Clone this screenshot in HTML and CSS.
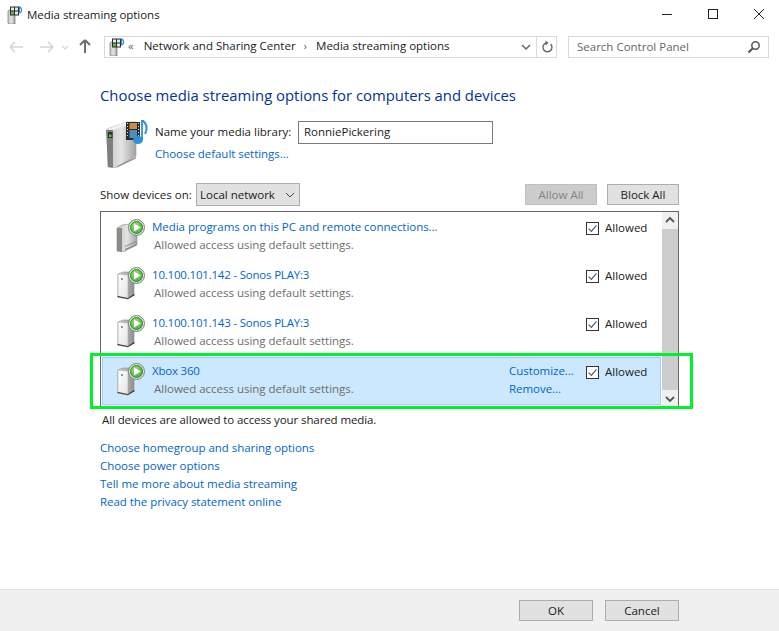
FILE: index.html
```html
<!DOCTYPE html>
<html lang="en">
<head>
<meta charset="utf-8">
<title>Media streaming options</title>
<link rel="stylesheet" href="styles.css">
</head>
<body>
<svg class="defs" width="0" height="0" aria-hidden="true">
  <defs>
    <linearGradient id="tw" x1="0" x2="1" y1="0" y2="0"><stop offset="0" stop-color="#d8d8d8"/><stop offset="1" stop-color="#8e8e8e"/></linearGradient>
    <linearGradient id="tg" x1="0" x2="1" y1="0" y2="0"><stop offset="0" stop-color="#c4c4c4"/><stop offset=".5" stop-color="#e4e4e4"/><stop offset="1" stop-color="#a2a2a2"/></linearGradient>
    <linearGradient id="tf" x1="0" x2="1" y1="0" y2="1"><stop offset="0" stop-color="#ffffff"/><stop offset="1" stop-color="#e4e4e4"/></linearGradient>
    <radialGradient id="gb" cx=".4" cy=".35" r=".8"><stop offset="0" stop-color="#a6e07e"/><stop offset="1" stop-color="#3f9f34"/></radialGradient>
    <symbol id="dev-white" viewBox="0 0 38 34">
      <path d="M3 8l5-2 11 0v23l-6 4-10-2z" fill="url(#tw)" stroke="#8f8f8f" stroke-width=".6"/>
      <path d="M3 8l10 1v24l-10-2z" fill="url(#tf)" stroke="#a5a5a5" stroke-width=".6"/>
      <rect x="6" y="12" width="2" height="2" fill="#7ea87e"/>
      <path d="M2 31l11 2 7-4-1-1-6 4-10-2z" fill="#3c3c3c"/>
      <circle cx="21.500" cy="9.500" r="8" fill="#d7e5d3" stroke="#77897a"/>
      <circle cx="21.500" cy="9.500" r="6" fill="url(#gb)" stroke="#2c8f2a"/>
      <path d="M19 5.600v7.800l6.800-3.900z" fill="#fff"/>
    </symbol>
    <symbol id="dev-gray" viewBox="0 0 38 34">
      <path d="M2 10l5-3 15-2v22l-14 7-6-1z" fill="url(#tg)" stroke="#8c8c8c" stroke-width=".6"/>
      <path d="M2 10l5 0v24l-5-1z" fill="#8a8a8a"/>
      <rect x="3.500" y="12" width="2" height="2" fill="#62b93c"/>
      <path d="M10 31l11-5v1.400l-11 5zM10 28l11-5v1l-11 5z" fill="#8a8a8a"/>
      <circle cx="21.500" cy="9.500" r="8" fill="#d7e5d3" stroke="#77897a"/>
      <circle cx="21.500" cy="9.500" r="6" fill="url(#gb)" stroke="#2c8f2a"/>
      <path d="M19 5.600v7.800l6.800-3.900z" fill="#fff"/>
    </symbol>
    <symbol id="media" viewBox="0 0 44 48">
      <path d="M2 9l20-7h9v34L10 48l-7-1z" fill="url(#tg)" stroke="#9b9b9b" stroke-width=".6"/>
      <path d="M1 10h7v37.500l-5-.5z" fill="#7f7f7f"/>
      <path d="M1 9.500l20-7.500h10L9 10z" fill="#f0f0f0"/>
      <rect x="3" y="12" width="4.500" height="6" fill="#2f2f2f"/>
      <rect x="4" y="14.500" width="2.500" height="2.500" fill="#62c13a"/>
      <path d="M12 46l19-9v1.600l-19 9z" fill="#8f8f8f"/>
      <rect x="21" y="2" width="14" height="18" fill="#2b2b2b"/>
      <path d="M22 3h1v1h-1zM22 6h1v1h-1zM22 9h1v1h-1zM22 12h1v1h-1zM22 15h1v1h-1zM33 3h1v1h-1zM33 6h1v1h-1zM33 9h1v1h-1zM33 12h1v1h-1zM33 15h1v1h-1z" fill="#ddd"/>
      <rect x="24.500" y="3" width="7.500" height="6" fill="#d08a48"/>
      <rect x="24.500" y="10" width="7.500" height="8" fill="#4c8fc4"/>
      <path d="M37 0c4 3 6 8 3 14" fill="none" stroke="#2f8fd8" stroke-width="2"/>
      <path d="M37 0v19" stroke="#2f8fd8" stroke-width="1.800"/>
      <ellipse cx="33" cy="20" rx="5" ry="4" fill="#2f8fd8"/>
    </symbol>
    <symbol id="small" viewBox="0 0 16 18">
      <path d="M1 5l1-1h6v14H2l-1-1z" fill="url(#tg)" stroke="#777" stroke-width=".7"/>
      <rect x="3" y="0.500" width="9" height="9" fill="#2b2b2b"/>
      <rect x="4" y="1.500" width="3" height="3" fill="#e8e8e8"/>
      <rect x="8" y="1.500" width="3" height="3" fill="#e8e8e8"/>
      <rect x="4" y="5.500" width="3" height="3" fill="#67b84a"/>
      <rect x="8" y="5.500" width="3" height="3" fill="#e8e8e8"/>
      <path d="M12.500 .5c2 1.500 3 3.500 1 6.500M12.500 .5v7" fill="none" stroke="#2f8fd8" stroke-width="1.200"/>
    </symbol>
    <symbol id="check" viewBox="0 0 13 13">
      <rect x=".5" y=".5" width="12" height="12" fill="#fff" stroke="#333"/>
      <path d="M2.600 6.600l2.800 2.800 5-6" fill="none" stroke="#555" stroke-width="1.100"/>
    </symbol>
  </defs>
</svg>

<div class="window">
  <header class="titlebar">
    <svg class="ico-small" width="16" height="18"><use href="#small"/></svg>
    <span class="title">Media streaming options</span>
    <div class="controls">
      <svg width="46" height="30" viewBox="0 0 46 30"><path d="M18 14.500h10" stroke="#222"/></svg>
      <svg width="46" height="30" viewBox="0 0 46 30"><rect x="18.500" y="9.500" width="9" height="9" fill="none" stroke="#222"/></svg>
      <svg width="46" height="30" viewBox="0 0 46 30"><path d="M18 9l10 10M28 9L18 19" stroke="#222" fill="none"/></svg>
    </div>
  </header>

  <nav class="navbar">
    <div class="navbtns">
      <svg width="30" height="14" viewBox="0 0 30 14"><path d="M10 7H23M10 7l5-5M10 7l5 5" stroke="#d4d4d4" stroke-width="1.600" fill="none"/></svg>
      <svg width="24" height="14" viewBox="0 0 24 14"><path d="M10 7H23M23 7l-5-5M23 7l-5 5" stroke="#d4d4d4" stroke-width="1.600" fill="none"/></svg>
      <svg width="20" height="14" viewBox="0 0 20 14"><path d="M8 6l3 3 3-3" stroke="#d4d4d4" stroke-width="1.200" fill="none"/></svg>
      <svg width="24" height="16" viewBox="0 0 24 16"><path d="M7 2v13M7 2L2 7M7 2l5 5" stroke="#6e6e6e" stroke-width="2" fill="none" transform="translate(4 -1)"/></svg>
    </div>
    <div class="address">
      <svg class="ico-addr" width="16" height="18"><use href="#small"/></svg>
      <span class="crumb-sep chev">«</span>
      <span class="crumb">Network and Sharing Center</span>
      <span class="crumb-sep">›</span>
      <span class="crumb">Media streaming options</span>
      <svg class="addr-down" width="12" height="8" viewBox="0 0 12 8"><path d="M2 2l4 4 4-4" stroke="#666" stroke-width="1.500" fill="none"/></svg>
      <span class="addr-refresh">
        <svg width="14" height="14" viewBox="0 0 14 14"><path d="M10.500 4A4.500 4.500 0 1 1 6 3" stroke="#6a6a6a" stroke-width="1.500" fill="none"/><path d="M5.500 0.500v5l3-2.500z" fill="#6a6a6a"/></svg>
      </span>
    </div>
    <div class="search">
      <span class="search-text">Search Control Panel</span>
      <svg width="14" height="14" viewBox="0 0 14 14"><circle cx="8.500" cy="5.500" r="3.700" fill="none" stroke="#555" stroke-width="1.500"/><path d="M5.800 8.200L1.500 12.500" stroke="#555" stroke-width="2"/></svg>
    </div>
  </nav>

  <main class="content">
    <h1>Choose media streaming options for computers and devices</h1>
    <section class="library">
      <svg class="ico-media" width="44" height="48"><use href="#media"/></svg>
      <div class="lib-fields">
        <div class="lib-name">
          <label class="lib-label">Name your media library:</label>
          <div class="textbox">RonniePickering</div>
        </div>
        <a class="link lib-link">Choose default settings...</a>
      </div>
    </section>

    <section class="toolbar">
      <span class="show-label">Show devices on:</span>
      <div class="select">
        <span>Local network</span>
        <svg width="10" height="6" viewBox="0 0 10 6"><path d="M1 1l4 4 4-4" stroke="#444" fill="none"/></svg>
      </div>
      <div class="tool-btns">
        <button class="btn disabled">Allow All</button>
        <button class="btn">Block All</button>
      </div>
    </section>

    <section class="listbox">
      <div class="rows">
        <div class="row">
          <svg class="dev" width="38" height="34"><use href="#dev-gray"/></svg>
          <div class="row-text"><a class="link">Media programs on this PC and remote connections...</a><p class="sub">Allowed access using default settings.</p></div>
          <label class="allow"><svg width="13" height="13"><use href="#check"/></svg>Allowed</label>
        </div>
        <div class="row">
          <svg class="dev" width="38" height="34"><use href="#dev-white"/></svg>
          <div class="row-text"><a class="link ip">10.100.101.142 - Sonos PLAY:3</a><p class="sub">Allowed access using default settings.</p></div>
          <label class="allow"><svg width="13" height="13"><use href="#check"/></svg>Allowed</label>
        </div>
        <div class="row">
          <svg class="dev" width="38" height="34"><use href="#dev-white"/></svg>
          <div class="row-text"><a class="link ip">10.100.101.143 - Sonos PLAY:3</a><p class="sub">Allowed access using default settings.</p></div>
          <label class="allow"><svg width="13" height="13"><use href="#check"/></svg>Allowed</label>
        </div>
        <div class="row selected">
          <svg class="dev" width="38" height="34"><use href="#dev-white"/></svg>
          <div class="row-text"><a class="link ip">Xbox 360</a><p class="sub">Allowed access using default settings.</p></div>
          <div class="row-actions"><a class="link">Customize...</a><a class="link">Remove...</a></div>
          <label class="allow"><svg width="13" height="13"><use href="#check"/></svg>Allowed</label>
        </div>
      </div>
      <div class="scrollbar">
        <svg width="16" height="17" viewBox="0 0 16 17"><path d="M4 10l4-4 4 4" stroke="#555" stroke-width="1.800" fill="none"/></svg>
        <div class="thumb"></div>
        <svg width="16" height="17" viewBox="0 0 16 17"><path d="M4 7l4 4 4-4" stroke="#555" stroke-width="1.800" fill="none"/></svg>
      </div>
    </section>

    <p class="status">All devices are allowed to access your shared media.</p>

    <div class="links">
      <a class="link">Choose homegroup and sharing options</a>
      <a class="link">Choose power options</a>
      <a class="link">Tell me more about media streaming</a>
      <a class="link">Read the privacy statement online</a>
    </div>
  </main>

  <footer class="footer">
    <button class="btn wide">OK</button>
    <button class="btn wide">Cancel</button>
  </footer>

  <div class="highlight"></div>
</div>
</body>
</html>
```
FILE: styles.css
```css
* { box-sizing: border-box; }
html, body { margin: 0; height: 100%; overflow: hidden; }
body { background: #fff; font-family: "Open Sans", "Liberation Sans", sans-serif; font-size: 11.5px; color: #1a1a1a; }
.defs { position: absolute; }
.window { position: relative; display: flex; flex-direction: column; height: 631px; width: 779px; }

.titlebar { display: flex; align-items: center; height: 30px; padding-left: 7px; flex: none; }
.ico-small { display: block; }
.title { margin-left: 4px; margin-bottom: 2px; letter-spacing: -0.04px; }
.controls { margin-left: auto; margin-right: -3px; display: flex; }

.navbar { display: flex; height: 22px; margin-top: 6px; flex: none; align-items: stretch; }
.navbtns { display: flex; align-items: center; width: 104px; }
.address { display: flex; align-items: center; width: 453px; border: 1px solid #d9d9d9; padding-left: 4px; }
.ico-addr { margin-right: 3px; }
.crumb-sep { color: #666; margin: 0 9px 3px 0; }
.crumb-sep.chev { margin-right: 10px; }
.crumb { margin-right: 8px; margin-bottom: 3px; }
.addr-down { margin-left: auto; margin-right: 4px; }
.addr-refresh { display: flex; align-items: center; justify-content: center; width: 20px; height: 100%; border-left: 1px solid #d9d9d9; }
.search { display: flex; align-items: center; justify-content: space-between; width: 201px; margin-left: 11px; border: 1px solid #d9d9d9; padding: 0 7px 0 8px; color: #666; }
.search-text { margin-bottom: 2px; }

.content { flex: 1; padding-left: 100px; width: 679px; }
h1 { margin: 27px 0 0; font-size: 14.85px; font-weight: 400; color: #003399; line-height: 20px; }
.library { display: flex; margin-top: 15px; padding-left: 5px; height: 48px; }
.ico-media { display: block; flex: none; }
.lib-fields { margin-left: 6px; }
.lib-name { display: flex; align-items: center; height: 24px; }
.lib-label { width: 143px; flex: none; margin-bottom: 2px; }
.textbox { width: 195px; height: 23px; border: 1px solid #7a7a7a; padding-left: 5px; line-height: 19px; }
.link { color: #0066cc; display: block; letter-spacing: -0.04px; }
.link.ip { letter-spacing: -0.2px; }
.lib-link { margin-top: 1px; line-height: 18px; }

.toolbar { display: flex; align-items: center; margin-top: 15px; height: 23px; }
.show-label { width: 96px; flex: none; }
.select { display: flex; align-items: center; justify-content: space-between; width: 104px; height: 23px; background: #e1e1e1; border: 1px solid #adadad; padding: 0 4px 0 3px; }
.tool-btns { display: flex; gap: 10px; margin-left: auto; }
.btn { font: inherit; color: #1a1a1a; background: #e1e1e1; border: 1px solid #adadad; padding: 0; height: 21px; width: 72px; }
.btn.disabled { background: #cccccc; border-color: #bfbfbf; color: #838383; }

.listbox { display: flex; margin-top: 5px; height: 197px; border: 1px solid #666; padding: 0; }
.rows { flex: 1; padding: 1px; }
.row { display: flex; height: 48px; padding-left: 12px; align-items: flex-start; border: 1px solid transparent; }
.row.selected { background: #cce8ff; border-color: #99d1ff; }
.dev { flex: none; margin-top: 4px; margin-right: -1px; }
.row-text { line-height: 18px; padding-top: 4px; flex: 1; }
.sub { margin: 0 0 0 2px; color: #6d6d6d; letter-spacing: -0.02px; }
.row-actions { line-height: 18px; padding-top: 4px; width: 77px; }
.allow { display: flex; align-items: center; gap: 6px; width: 74px; padding-top: 5px; height: 23px; line-height: 18px; }
.scrollbar { width: 16px; flex: none; display: flex; flex-direction: column; background: #f0f0f0; }
.thumb { flex: 1; background: #cdcdcd; }

.status { margin: 3px 0 0 2px; line-height: 18px; letter-spacing: -0.1px; }
.links { margin-top: 10px; line-height: 18px; }

.footer { flex: none; height: 42px; display: flex; justify-content: flex-end; align-items: flex-start; gap: 12px; padding: 10px 100px 0 0; background: #f0f0f0; border-top: 1px solid #dfdfdf; }
.btn.wide { width: 74px; height: 21px; }

.highlight { position: absolute; left: 90px; top: 353px; width: 603px; height: 56px; border: 3px solid #00f22b; pointer-events: none; }
```
